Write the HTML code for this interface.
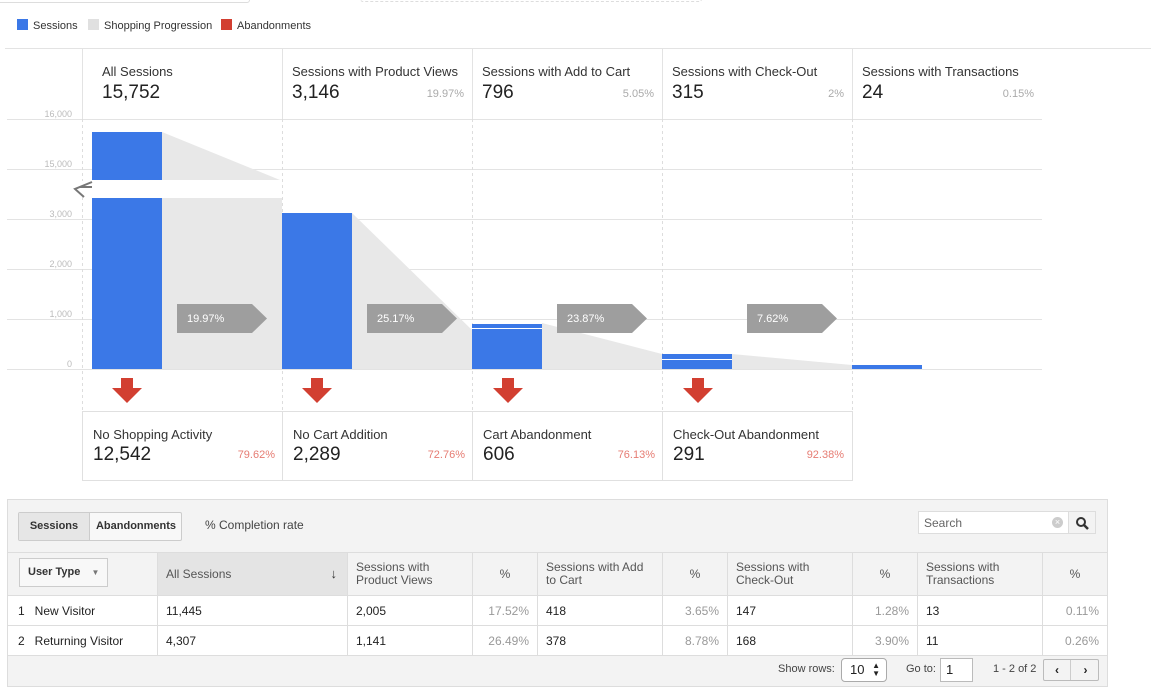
<!DOCTYPE html>
<html><head><meta charset="utf-8"><style>
*{box-sizing:border-box;margin:0;padding:0}
body{width:1151px;height:698px;background:#fff;font-family:"Liberation Sans",Arial,sans-serif;position:relative;overflow:hidden;color:#222}
.a{position:absolute}
.lg{font-size:11px;color:#333;top:20px}
.sq{position:absolute;width:11px;height:11px;top:19px}
.hd{position:absolute;top:48px;height:71px;padding:16px 0 0 20px}
.hd .t{font-size:13px;color:#333}
.hd .n{font-size:19px;color:#222;margin-top:3px}
.hd .p{position:absolute;right:8px;top:40px;font-size:11px;color:#aaa}
.ab{position:absolute;top:411px;height:70px;width:190px;border:1px solid #e0e0e0;border-right:none;padding:15px 0 0 10px}
.ab .t{font-size:13px;color:#333}
.ab .n{font-size:19px;color:#222;margin-top:2px}
.ab .p{position:absolute;right:8px;top:37px;font-size:11px;color:#e67c73}
table{border-collapse:collapse;font-size:12px}
td{border:1px solid #ddd;height:30px;padding:0 8px;background:#fff;color:#222}
.pc{text-align:right;color:#999}
th{font-weight:normal;color:#555;text-align:left;padding:0 8px;border:1px solid #ddd;height:43px;line-height:13px;font-size:12px;background:#f3f3f3}
</style></head><body>
<div class="a" style="left:-10px;top:-10px;width:260px;height:13px;border:1px solid #ddd;border-radius:3px"></div>
<div class="a" style="left:360px;top:-10px;width:342px;height:12px;border:1px dashed #ddd;border-radius:3px"></div>

<div class="sq" style="left:17px;background:#3b78e7"></div><div class="a lg" style="left:33px">Sessions</div>
<div class="sq" style="left:88px;background:#e0e0e0"></div><div class="a lg" style="left:104px">Shopping Progression</div>
<div class="sq" style="left:221px;background:#d23f31"></div><div class="a lg" style="left:237px">Abandonments</div>

<svg class="a" style="left:0;top:0" width="1151" height="500">
<line x1="5" y1="48.5" x2="1151" y2="48.5" stroke="#e3e3e3"/>
<g stroke="#e3e3e3">
<line x1="7" y1="119.5" x2="1042" y2="119.5"/><line x1="7" y1="169.5" x2="1042" y2="169.5"/>
<line x1="7" y1="219.5" x2="1042" y2="219.5"/><line x1="7" y1="269.5" x2="1042" y2="269.5"/>
<line x1="7" y1="319.5" x2="1042" y2="319.5"/><line x1="7" y1="369.5" x2="1042" y2="369.5"/>
</g>
<g stroke="#e3e3e3"><line x1="82.5" y1="48" x2="82.5" y2="119"/><line x1="282.5" y1="48" x2="282.5" y2="119"/><line x1="472.5" y1="48" x2="472.5" y2="119"/><line x1="662.5" y1="48" x2="662.5" y2="119"/><line x1="852.5" y1="48" x2="852.5" y2="119"/></g>
<g stroke="#ddd" stroke-dasharray="3,3"><line x1="82.5" y1="119" x2="82.5" y2="411"/><line x1="282.5" y1="119" x2="282.5" y2="411"/><line x1="472.5" y1="119" x2="472.5" y2="411"/><line x1="662.5" y1="119" x2="662.5" y2="411"/><line x1="852.5" y1="119" x2="852.5" y2="411"/></g>
<g font-size="9" fill="#bbb" text-anchor="end" font-family="Liberation Sans">
<text x="72" y="117">16,000</text><text x="72" y="167">15,000</text><text x="72" y="217">3,000</text><text x="72" y="267">2,000</text><text x="72" y="317">1,000</text><text x="72" y="367">0</text></g>
<g fill="#e8e8e8">
<polygon points="162,132 280,180 162,180"/>
<rect x="162" y="198" width="120" height="171"/>
<polygon points="352,213 472,330 472,369 352,369"/>
<polygon points="542,323 662,354 662,369 542,369"/>
<polygon points="732,354 852,365 852,369 732,369"/>
</g>
<rect x="0" y="181" width="282" height="16" fill="#fff"/>
<path d="M92,182 L75,189 L84,197 M80,187 L92,187" fill="none" stroke="#777" stroke-width="2"/>
<g fill="#3b78e7">
<rect x="92" y="132" width="70" height="48"/><rect x="92" y="198" width="70" height="171"/>
<rect x="282" y="213" width="70" height="156"/>
<rect x="472" y="324" width="70" height="45"/>
<rect x="662" y="354" width="70" height="15"/>
<rect x="852" y="365" width="70" height="4"/>
</g>
<rect x="472" y="328" width="70" height="1" fill="#fff"/><rect x="662" y="359" width="70" height="1" fill="#fff"/>
<g fill="#9e9e9e">
<polygon points="177,304 252,304 267,318.5 252,333 177,333"/>
<polygon points="367,304 442,304 457,318.5 442,333 367,333"/>
<polygon points="557,304 632,304 647,318.5 632,333 557,333"/>
<polygon points="747,304 822,304 837,318.5 822,333 747,333"/>
</g>
<g fill="#fff" font-size="11" font-family="Liberation Sans">
<text x="187" y="322">19.97%</text><text x="377" y="322">25.17%</text><text x="567" y="322">23.87%</text><text x="757" y="322">7.62%</text></g>
<g fill="#d23f31">
<polygon points="121,378 133,378 133,388 142,388 127,403 112,388 121,388"/>
<polygon points="311,378 323,378 323,388 332,388 317,403 302,388 311,388"/>
<polygon points="502,378 514,378 514,388 523,388 508,403 493,388 502,388"/>
<polygon points="692,378 704,378 704,388 713,388 698,403 683,388 692,388"/>
</g>
</svg>

<div class="hd" style="left:82px;width:200px"><div class="t">All Sessions</div><div class="n">15,752</div></div>
<div class="hd" style="left:272px;width:200px"><div class="t">Sessions with Product Views</div><div class="n">3,146</div><div class="p">19.97%</div></div>
<div class="hd" style="left:462px;width:200px"><div class="t">Sessions with Add to Cart</div><div class="n">796</div><div class="p">5.05%</div></div>
<div class="hd" style="left:652px;width:200px"><div class="t">Sessions with Check-Out</div><div class="n">315</div><div class="p">2%</div></div>
<div class="hd" style="left:842px;width:200px"><div class="t">Sessions with Transactions</div><div class="n">24</div><div class="p">0.15%</div></div>

<div class="ab" style="left:82px;width:201px"><div class="t">No Shopping Activity</div><div class="n">12,542</div><div class="p">79.62%</div></div>
<div class="ab" style="left:282px;width:191px"><div class="t">No Cart Addition</div><div class="n">2,289</div><div class="p">72.76%</div></div>
<div class="ab" style="left:472px;width:191px"><div class="t">Cart Abandonment</div><div class="n">606</div><div class="p">76.13%</div></div>
<div class="ab" style="left:662px;width:191px;border-right:1px solid #e0e0e0"><div class="t">Check-Out Abandonment</div><div class="n">291</div><div class="p">92.38%</div></div>

<div class="a" style="left:7px;top:499px;width:1101px;height:188px;background:#f3f3f3;border:1px solid #ddd"></div>
<div class="a" style="left:18px;top:512px;width:164px;height:29px;border:1px solid #ccc;border-radius:2px;background:#f8f8f8;font-size:11px;font-weight:bold;color:#333">
<div class="a" style="left:0;top:0;width:71px;height:27px;background:#e6e6e6;border-right:1px solid #ccc;text-align:center;line-height:27px">Sessions</div>
<div class="a" style="left:71px;top:0;width:92px;height:27px;text-align:center;line-height:27px">Abandonments</div></div>
<div class="a" style="left:205px;top:518px;font-size:12px;color:#444">% Completion rate</div>
<div class="a" style="left:918px;top:511px;width:178px;height:23px;background:#fff;border:1px solid #ddd;font-size:12px;color:#666;padding:4px 5px">Search
<div class="a" style="left:133px;top:5px;width:11px;height:11px;border-radius:50%;background:#ccc;color:#fff;font-size:9px;line-height:11px;text-align:center">×</div>
<div class="a" style="left:149px;top:-1px;width:28px;height:23px;border:1px solid #ddd;background:#f3f3f3"><svg width="28" height="22"><circle cx="12" cy="10" r="4" fill="none" stroke="#333" stroke-width="2"/><line x1="15" y1="13" x2="19" y2="17" stroke="#333" stroke-width="2.5"/></svg></div></div>

<table class="a" style="left:7px;top:552px;width:1101px">
<tr><th style="width:150px;position:relative"><div class="a" style="left:11px;top:5px;width:89px;height:29px;border:1px solid #ccc;background:#f8f8f8;font-weight:bold;color:#333;font-size:11px;line-height:27px;padding-left:8px">User Type <span style="color:#777;font-size:8px;margin-left:8px">▼</span></div></th>
<th style="width:190px;background:#e4e4e4;position:relative">All Sessions<span style="position:absolute;right:10px;top:14px;font-size:13px;color:#333">↓</span></th>
<th style="width:125px">Sessions with<br>Product Views</th><th style="width:65px;text-align:center">%</th>
<th style="width:125px">Sessions with Add<br>to Cart</th><th style="width:65px;text-align:center">%</th>
<th style="width:125px">Sessions with<br>Check-Out</th><th style="width:65px;text-align:center">%</th>
<th style="width:125px">Sessions with<br>Transactions</th><th style="text-align:center">%</th></tr>
<tr><td style="padding-left:10px">1&nbsp;&nbsp;&nbsp;New Visitor</td><td>11,445</td><td>2,005</td><td class="pc">17.52%</td><td>418</td><td class="pc">3.65%</td><td>147</td><td class="pc">1.28%</td><td>13</td><td class="pc">0.11%</td></tr>
<tr><td style="padding-left:10px">2&nbsp;&nbsp;&nbsp;Returning Visitor</td><td>4,307</td><td>1,141</td><td class="pc">26.49%</td><td>378</td><td class="pc">8.78%</td><td>168</td><td class="pc">3.90%</td><td>11</td><td class="pc">0.26%</td></tr>
</table>

<div class="a" style="left:778px;top:663px;font-size:11px;color:#444">Show rows:</div>
<div class="a" style="left:841px;top:658px;width:46px;height:24px;border:1px solid #aaa;border-radius:4px;background:#fff;font-size:13px;padding:3px 8px">10<span style="position:absolute;right:6px;top:3px;font-size:8px;line-height:8px">▲<br>▼</span></div>
<div class="a" style="left:906px;top:663px;font-size:11px;color:#444">Go to:</div>
<div class="a" style="left:940px;top:658px;width:33px;height:24px;border:1px solid #bbb;background:#fff;font-size:13px;padding:3px 5px">1</div>
<div class="a" style="left:993px;top:663px;font-size:11px;color:#444">1 - 2 of 2</div>
<div class="a" style="left:1043px;top:659px;width:56px;height:22px;border:1px solid #bbb;border-radius:2px;background:#f3f3f3;font-size:12px;font-weight:bold">
<div class="a" style="left:0;width:27px;height:20px;border-right:1px solid #ccc;text-align:center;line-height:20px">‹</div>
<div class="a" style="left:28px;width:27px;height:20px;text-align:center;line-height:20px">›</div></div>
</body></html>
